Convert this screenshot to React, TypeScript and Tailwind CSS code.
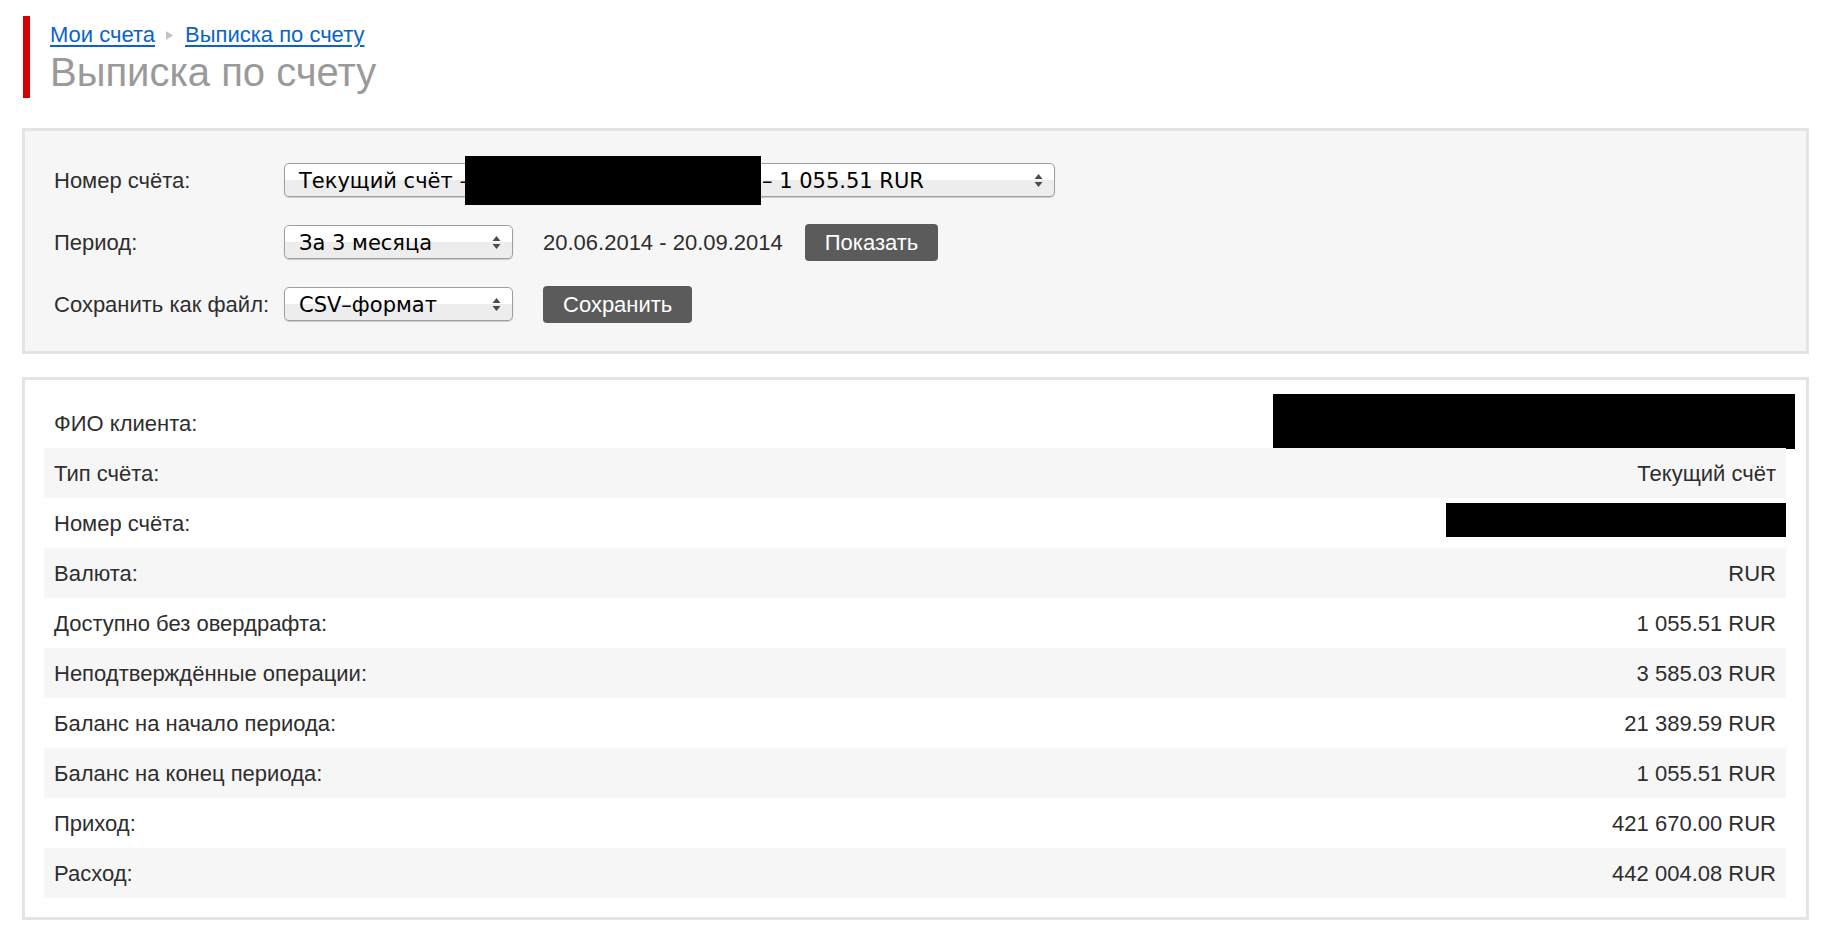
import React from "react";

function SelectArrows() {
  return (
    <svg width="9" height="15" viewBox="0 0 9 15" className="shrink-0">
      <polygon points="0.5,6 4.5,1 8.5,6" fill="#4a4a4a" />
      <polygon points="0.5,9 4.5,14 8.5,9" fill="#4a4a4a" />
    </svg>
  );
}

function FakeSelect({ width, children }: { width: string; children: React.ReactNode }) {
  return (
    <div
      className={`${width} relative flex h-[34px] shrink-0 items-center justify-between rounded-[5px] border border-[#9f9f9f] bg-gradient-to-b from-white from-50% to-[#ededed] to-50% pl-[14px] pr-[11px] font-['DejaVu_Sans',sans-serif] text-[21px] text-black shadow-[0_1px_1px_rgba(0,0,0,0.18)]`}
    >
      <div className="flex min-w-0 items-center whitespace-nowrap pt-[3px]">{children}</div>
      <SelectArrows />
    </div>
  );
}

function DarkButton({ children }: { children: React.ReactNode }) {
  return (
    <button className="flex h-[37px] shrink-0 items-center rounded-[4px] bg-[#5b5b5b] px-[20px] text-[22px] text-white">
      {children}
    </button>
  );
}

const rows: { label: string; value?: string; redact?: "wide" | "narrow" }[] = [
  { label: "ФИО клиента:", redact: "wide" },
  { label: "Тип счёта:", value: "Текущий счёт" },
  { label: "Номер счёта:", redact: "narrow" },
  { label: "Валюта:", value: "RUR" },
  { label: "Доступно без овердрафта:", value: "1 055.51 RUR" },
  { label: "Неподтверждённые операции:", value: "3 585.03 RUR" },
  { label: "Баланс на начало периода:", value: "21 389.59 RUR" },
  { label: "Баланс на конец периода:", value: "1 055.51 RUR" },
  { label: "Приход:", value: "421 670.00 RUR" },
  { label: "Расход:", value: "442 004.08 RUR" },
];

export default function App() {
  return (
    <div className="min-h-screen bg-white pb-4 pl-[22px] pr-[19px] pt-4 font-['Liberation_Sans',Arial,sans-serif] text-[22px] text-[#2e2e2e]">
      {/* Header */}
      <div className="ml-px border-l-[7px] border-[#d40000] pb-[3px] pl-[20px] pt-[5px]">
        <div className="flex h-[28px] items-center leading-[28px]">
          <a href="#" className="text-[#0a64c8] underline decoration-[1.5px] underline-offset-[3px]">
            Мои счета
          </a>
          <svg width="7" height="9" viewBox="0 0 7 9" className="ml-[11px] mr-[12px]">
            <polygon points="0,0 7,4.5 0,9" fill="#c4c4c4" />
          </svg>
          <a href="#" className="text-[#0a64c8] underline decoration-[1.5px] underline-offset-[3px]">
            Выписка по счету
          </a>
        </div>
        <h1 className="text-[40px] leading-[46px] text-[#9a9a9a]">Выписка по счету</h1>
      </div>

      {/* Form box */}
      <div className="mt-[30px] border-[3px] border-[#e4e4e4] bg-[#f6f6f6] pb-[30px] pl-[29px] pt-[32px]">
        <div className="flex flex-col gap-[28px]">
          <div className="flex h-[34px] items-center">
            <div className="w-[230px] shrink-0">Номер счёта:</div>
            <FakeSelect width="w-[771px]">
              <span className="w-[166px]">Текущий счёт –</span>
              <span className="relative w-[297px] self-stretch">
                <span className="absolute -top-[10px] left-0 h-[49px] w-[296px] bg-black" />
              </span>
              <span>– 1 055.51 RUR</span>
            </FakeSelect>
          </div>
          <div className="flex h-[34px] items-center">
            <div className="w-[230px] shrink-0">Период:</div>
            <FakeSelect width="w-[229px]">
              <span>За 3 месяца</span>
            </FakeSelect>
            <div className="ml-[30px] mr-[22px]">20.06.2014 - 20.09.2014</div>
            <DarkButton>Показать</DarkButton>
          </div>
          <div className="flex h-[34px] items-center">
            <div className="w-[230px] shrink-0">Сохранить как файл:</div>
            <FakeSelect width="w-[229px]">
              <span>CSV–формат</span>
            </FakeSelect>
            <div className="ml-[30px]">
              <DarkButton>Сохранить</DarkButton>
            </div>
          </div>
        </div>
      </div>

      {/* Info box */}
      <div className="mt-[23px] border-[3px] border-[#e4e4e4] bg-white pb-[19px] pl-[19px] pr-[20px] pt-[18px]">
        {rows.map((r, i) => (
          <div
            key={r.label}
            className={`relative flex h-[50px] items-center justify-between px-[10px] ${i % 2 === 1 ? "bg-[#f6f6f6]" : "bg-white"}`}
          >
            <span>{r.label}</span>
            {r.value && <span>{r.value}</span>}
            {r.redact === "wide" && (
              <span className="absolute left-[1229px] top-[-4px] h-[55px] w-[522px] bg-black" />
            )}
            {r.redact === "narrow" && (
              <span className="absolute right-0 top-[5px] h-[34px] w-[340px] bg-black" />
            )}
          </div>
        ))}
      </div>
    </div>
  );
}
